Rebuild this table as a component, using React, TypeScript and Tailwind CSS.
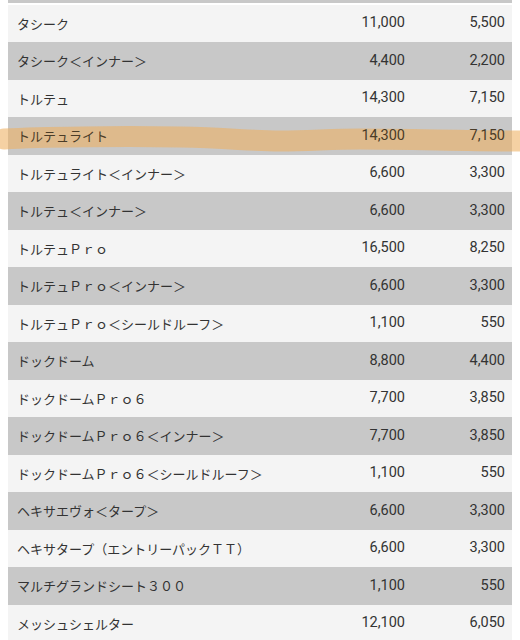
const rows: [string, string, string][] = [
  ["タシーク", "11,000", "5,500"],
  ["タシーク＜インナー＞", "4,400", "2,200"],
  ["トルテュ", "14,300", "7,150"],
  ["トルテュライト", "14,300", "7,150"],
  ["トルテュライト＜インナー＞", "6,600", "3,300"],
  ["トルテュ＜インナー＞", "6,600", "3,300"],
  ["トルテュＰｒｏ", "16,500", "8,250"],
  ["トルテュＰｒｏ＜インナー＞", "6,600", "3,300"],
  ["トルテュＰｒｏ＜シールドルーフ＞", "1,100", "550"],
  ["ドックドーム", "8,800", "4,400"],
  ["ドックドームＰｒｏ６", "7,700", "3,850"],
  ["ドックドームＰｒｏ６＜インナー＞", "7,700", "3,850"],
  ["ドックドームＰｒｏ６＜シールドルーフ＞", "1,100", "550"],
  ["ヘキサエヴォ＜タープ＞", "6,600", "3,300"],
  ["ヘキサタープ（エントリーパックＴＴ）", "6,600", "3,300"],
  ["マルチグランドシート３００", "1,100", "550"],
  ["メッシュシェルター", "12,100", "6,050"],
];

export default function App() {
  return (
    <div className="relative h-[640px] w-[520px] overflow-hidden bg-white text-[#333]">
      {/* marker highlight, under the text */}
      <svg
        className="pointer-events-none absolute left-0 top-0 z-10"
        width="520"
        height="640"
        viewBox="0 0 520 640"
      >
        <path
          d="M4 139 C40 137 120 136 180 137 C230 138 250 141 280 141 C310 141 330 139 360 139 C410 139 470 141 530 141"
          fill="none"
          stroke="rgb(238,176,96)"
          strokeOpacity="0.58"
          strokeWidth="21"
          strokeLinecap="round"
        />
      </svg>

      <div className="px-2">
        {/* tail of the row above */}
        <div className="h-[3px] bg-[#c8c8c8]" />
        <div className="mt-[1.5px]">
          {rows.map(([name, price, half], i) => (
            <div
              key={i}
              className={`flex h-[37.5px] items-center ${
                i % 2 === 0 ? "bg-[#f4f4f4]" : "bg-[#c8c8c8]"
              } ${i === 3 ? "text-[#4a3c28]" : ""}`}
            >
              <div className="relative z-20 flex-1 pl-[9px] font-['Noto_Sans_CJK_JP',sans-serif] text-[13px]">
                {name}
              </div>
              <div className="relative z-20 w-[100px] pr-[7px] text-right font-['Roboto',sans-serif] text-[14.5px]">
                {price}
              </div>
              <div className="relative z-20 w-[100px] pr-[7px] text-right font-['Roboto',sans-serif] text-[14.5px]">
                {half}
              </div>
            </div>
          ))}
        </div>
      </div>
    </div>
  );
}
